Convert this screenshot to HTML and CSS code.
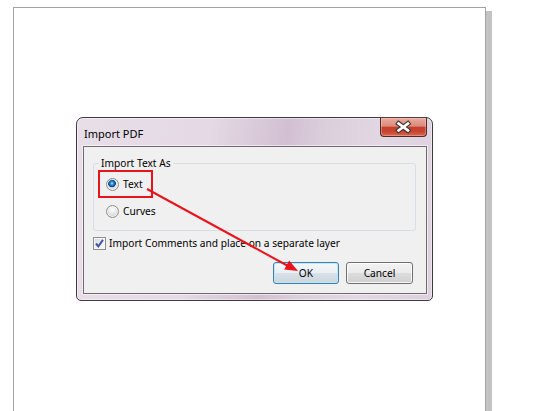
FILE: index.html
```html
<!DOCTYPE html>
<html>
<head>
<meta charset="utf-8">
<title>Import PDF</title>
<link rel="stylesheet" href="styles.css">
</head>
<body>
<div class="page">
  <div class="dialog">
    <div class="titlebar">
      <span class="title">Import PDF</span>
      <span class="close">
        <svg width="47" height="20" viewBox="0 0 47 20">
          <path d="M19 6.5 L28.5 13.5 M28.5 6.5 L19 13.5" stroke="#3b3434" stroke-width="5" stroke-linecap="square" fill="none"/>
          <path d="M19 6.5 L28.5 13.5 M28.5 6.5 L19 13.5" stroke="#ffffff" stroke-width="2.8" stroke-linecap="square" fill="none"/>
        </svg>
      </span>
    </div>
    <div class="client">
      <fieldset class="group">
        <legend>Import Text As</legend>
        <div class="annot">
          <label class="opt"><span class="radio on"></span>Text</label>
        </div>
        <label class="opt curves"><span class="radio"></span>Curves</label>
      </fieldset>
      <label class="check-row">
        <span class="checkbox">
          <svg width="11" height="11" viewBox="0 0 11 11"><path d="M2 5.5 L4.3 8.3 L9 1.8" stroke="#3f56a6" stroke-width="2" fill="none"/></svg>
        </span>Import Comments and place on a separate layer</label>
      <div class="buttons">
        <button class="btn default">OK</button>
        <button class="btn">Cancel</button>
      </div>
    </div>
  </div>
</div>
<svg class="arrow" width="554" height="411" viewBox="0 0 554 411">
  <line x1="147" y1="189" x2="289" y2="266.5" stroke="#e8141c" stroke-width="2"/>
  <polygon points="298,271 284.2,269.4 289.2,260.4" fill="#e8141c"/>
</svg>
</body>
</html>
```

FILE: styles.css
```css
html, body {
  margin: 0;
  padding: 0;
  background: #ffffff;
  width: 554px;
  height: 411px;
  overflow: hidden;
}

body {
  font-family: "Noto Sans", "Open Sans", sans-serif;
  font-size: 10.2px;
  color: #000;
}

.page {
  margin: 7px 0 0 13px;
  width: 409px;
  height: 294px;
  border: 1px solid #a3a3a3;
  border-bottom: none;
  background: #ffffff;
  box-shadow: 6px 4px 0 #c3c3c3;
  padding: 109px 0 0 62px;
  box-sizing: content-box;
}

.dialog {
  width: 357px;
  height: 184px;
  box-sizing: border-box;
  border: 1px solid #3e3a3e;
  border-radius: 7px 7px 5px 5px;
  background: linear-gradient(100deg, #e8dee8 0%, #e4d9e4 35%, #d2c0d2 55%, #dccfdc 65%, #e3d7e3 80%, #ddd0dd 100%);
  box-shadow: inset 0 0 0 1px rgba(255, 255, 255, 0.45);
  padding: 0 5px 6px 6px;
  display: flex;
  flex-direction: column;
}

.titlebar {
  height: 28px;
  display: flex;
  justify-content: space-between;
  align-items: flex-start;
}

.title {
  padding: 8px 0 0 1px;
  font-size: 11px;
  line-height: 15px;
  color: #000;
}

.close {
  width: 47px;
  height: 20px;
  margin-top: -1px;
  box-sizing: border-box;
  border: 1px solid #4a2c2c;
  border-top-color: #5a3a3a;
  border-radius: 0 0 4px 4px;
  background: linear-gradient(180deg, #e9aca0 0%, #dc8a7a 45%, #c3402d 52%, #c84431 75%, #d9674f 100%);
  box-shadow: inset 0 0 0 1px rgba(255, 220, 210, 0.35);
  display: flex;
}

.close svg {
  margin: -1px 0 0 -1px;
}

.client {
  flex: 1;
  border: 1px solid #6e6a6e;
  box-shadow: 0 0 0 1px rgba(255, 255, 255, 0.55);
  background: #f0f0f0;
  display: flex;
  flex-direction: column;
}

.group {
  margin: 9px 10px 0 9px;
  padding: 0 0 11px 0;
  border: 1px solid #d5dfe5;
  border-radius: 3px;
  min-width: 0;
}

.group legend {
  margin-left: 5px;
  padding: 0 2px;
  line-height: 15px;
}

.annot {
  width: 55px;
  height: 28px;
  box-sizing: border-box;
  margin: -1px 0 0 4px;
  border: 2px solid #e8141c;
  padding: 1px 0 0 6px;
  display: flex;
  align-items: center;
}

.opt {
  display: flex;
  align-items: center;
  gap: 4px;
  line-height: 15px;
}

.curves {
  margin: 6px 0 0 12px;
}

.radio {
  width: 13px;
  height: 13px;
  box-sizing: border-box;
  border-radius: 50%;
  border: 1px solid #8d8d8d;
  background: radial-gradient(circle at 50% 35%, #ffffff 0, #ececec 35%, #d2d2d2 75%, #c4c4c4 100%);
  box-shadow: inset 0 0 0 1px rgba(255, 255, 255, 0.7);
  flex: none;
}

.radio.on {
  background:
    radial-gradient(circle at 45% 40%, #b8ecff 0, #3a9ee0 1.3px, #0d5ea8 2.8px, #0a3f78 3.6px, rgba(10, 63, 120, 0) 4.2px),
    radial-gradient(circle at 50% 35%, #ffffff 0, #ececec 35%, #d2d2d2 75%, #c4c4c4 100%);
}

.check-row {
  margin: 5px 0 0 9px;
  display: flex;
  align-items: center;
  gap: 3px;
  line-height: 15px;
}

.checkbox {
  width: 13px;
  height: 13px;
  box-sizing: border-box;
  border: 1px solid #8e8f8f;
  background: linear-gradient(135deg, #d4d4d4 0%, #f4f4f4 60%, #ffffff 100%);
  box-shadow: inset 0 0 0 1px #f6f6f6;
  display: flex;
  align-items: center;
  justify-content: center;
  flex: none;
}

.buttons {
  margin: 11px 13px 0 0;
  display: flex;
  justify-content: flex-end;
  gap: 7px;
}

.btn {
  height: 22px;
  box-sizing: border-box;
  font-family: "Noto Sans", "Open Sans", sans-serif;
  font-size: 10.2px;
  color: #000;
  padding: 0;
  border: 1px solid #707070;
  border-radius: 3px;
  background: linear-gradient(180deg, #f2f2f2 0%, #ebebeb 48%, #dddddd 52%, #cfcfcf 100%);
  box-shadow: inset 0 0 0 1px rgba(255, 255, 255, 0.8);
  line-height: 18px;
  width: 67px;
}

.btn.default {
  width: 66px;
  border-color: #3c7fb1;
  background: linear-gradient(180deg, #f4f8fb 0%, #e9eff3 48%, #d8e1e7 52%, #cbd5dc 100%);
  box-shadow: inset 0 0 0 1px #bfe7f8;
}

.arrow {
  position: absolute;
  left: 0;
  top: 0;
  pointer-events: none;
}
```
